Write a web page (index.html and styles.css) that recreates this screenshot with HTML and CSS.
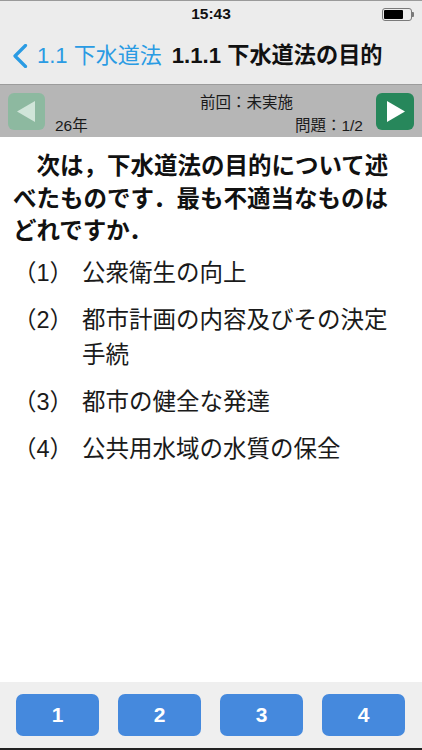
FILE: index.html
```html
<!DOCTYPE html>
<html lang="ja">
<head>
<meta charset="utf-8">
<title>1.1.1 下水道法の目的</title>
<link rel="stylesheet" href="styles.css">
</head>
<body>
<div class="screen">
  <div class="status">
    <span></span>
    <span class="time">15:43</span>
    <div class="battery"><div class="battery-body"><div class="battery-fill"></div></div><div class="battery-cap"></div></div>
  </div>
  <div class="nav">
    <div class="back">
      <svg class="chevron" width="16" height="24" viewBox="0 0 16 24"><polyline points="13.5,1.5 3,12 13.5,22.5" fill="none" stroke="#2a9be3" stroke-width="3.2" stroke-linecap="round" stroke-linejoin="round"/></svg>
      <span class="back-text">1.1 下水道法</span>
    </div>
    <div class="title">1.1.1 下水道法の目的</div>
  </div>
  <div class="toolbar">
    <div class="arrow prev"><svg width="37" height="37" viewBox="0 0 37 37"><polygon points="27,8 27,29 9,18.5" fill="#d0e5d9"/></svg></div>
    <div class="info">
      <div class="row1">前回：未実施</div>
      <div class="row2"><span>26年</span><span>問題：1/2</span></div>
    </div>
    <div class="arrow next"><svg width="38" height="37" viewBox="0 0 38 37"><polygon points="11,8 11,29 29,18.5" fill="#ffffff"/></svg></div>
  </div>
  <div class="content">
    <p class="question">次は，下水道法の目的について述べたものです．最も不適当なものはどれですか．</p>
    <ol class="choices">
      <li><span class="num">（1）</span><span class="text">公衆衛生の向上</span></li>
      <li><span class="num">（2）</span><span class="text">都市計画の内容及びその決定手続</span></li>
      <li><span class="num">（3）</span><span class="text">都市の健全な発達</span></li>
      <li><span class="num">（4）</span><span class="text">公共用水域の水質の保全</span></li>
    </ol>
  </div>
  <div class="answers">
    <div class="answer">1</div>
    <div class="answer">2</div>
    <div class="answer">3</div>
    <div class="answer">4</div>
  </div>
</div>
</body>
</html>
```
FILE: styles.css
```css
* { box-sizing: border-box; }
html, body { margin: 0; padding: 0; background: #ffffff; }
body {
  font-family: "Liberation Sans", "Noto Sans CJK JP", sans-serif;
  color: #111111;
}
.screen {
  width: 422px;
  height: 750px;
  display: flex;
  flex-direction: column;
  overflow: hidden;
}
.status {
  height: 28px;
  border-top: 1px solid #9a9a9a;
  background: #ececec;
  display: grid;
  grid-template-columns: 1fr auto 1fr;
  align-items: center;
}
.time {
  font-size: 15.5px;
  font-weight: bold;
  color: #111;
  line-height: 18px;
  margin-top: -1px;
}
.battery {
  justify-self: end;
  margin-right: 8px;
  display: flex;
  align-items: center;
  margin-top: -1px;
}
.battery-body {
  width: 30px;
  height: 13px;
  border: 1px solid #7a7a7a;
  border-radius: 3px;
  padding: 1px;
}
.battery-fill {
  width: 19px;
  height: 100%;
  background: #000;
  border-radius: 1px;
}
.battery-cap {
  width: 2px;
  height: 5px;
  background: #7a7a7a;
  border-radius: 0 1px 1px 0;
}
.nav {
  height: 56px;
  background: #ececec;
  display: flex;
  align-items: center;
  padding-left: 12px;
}
.back {
  display: flex;
  align-items: center;
}
.chevron { display: block; }
.back-text {
  margin-left: 9px;
  font-size: 22px;
  color: #2a9be3;
  line-height: 26px;
}
.title {
  margin-left: 10px;
  font-size: 22.2px;
  font-weight: bold;
  color: #111;
  line-height: 26px;
}
.toolbar {
  height: 53px;
  border-top: 1px solid #9c9c9c;
  background: #b6b6b6;
  display: flex;
  align-items: stretch;
  padding: 0 8px;
}
.arrow {
  align-self: center;
  width: 37px;
  height: 37px;
  border-radius: 6px;
  display: flex;
  align-items: center;
  justify-content: center;
}
.arrow svg { display: block; }
.arrow.prev { background: #8db9a0; }
.arrow.next { background: #27875b; width: 38px; }
.info {
  flex: 1;
  display: flex;
  flex-direction: column;
  padding-top: 8px;
  font-size: 15.5px;
  color: #1a1a1a;
}
.row1 {
  line-height: 20px;
  padding-left: 155px;
}
.row2 {
  margin-top: 3px;
  line-height: 20px;
  display: flex;
  justify-content: space-between;
  padding-left: 10px;
  padding-right: 13px;
}
.content {
  flex: 1;
  background: #ffffff;
  padding: 13px 13px 0 13px;
}
.question {
  margin: 0;
  font-size: 23.5px;
  font-weight: bold;
  line-height: 32.7px;
  text-indent: 1em;
  color: #111;
}
.choices {
  list-style: none;
  margin: 8px 0 0 0;
  padding: 0 6px 0 0;
}
.choices li {
  display: flex;
  font-size: 23.5px;
  line-height: 35px;
  margin-bottom: 12px;
  color: #1a1a1a;
}
.num {
  flex: 0 0 69px;
}
.text { flex: 1; }
.answers {
  height: 68px;
  background: #efefef;
  border-bottom: 2px solid #222222;
  display: flex;
  align-items: center;
  gap: 19px;
  padding-left: 16px;
}
.answer {
  width: 83px;
  height: 42px;
  border-radius: 7px;
  background: #4589dd;
  color: #ffffff;
  font-size: 21px;
  font-weight: bold;
  display: flex;
  align-items: center;
  justify-content: center;
}
```
